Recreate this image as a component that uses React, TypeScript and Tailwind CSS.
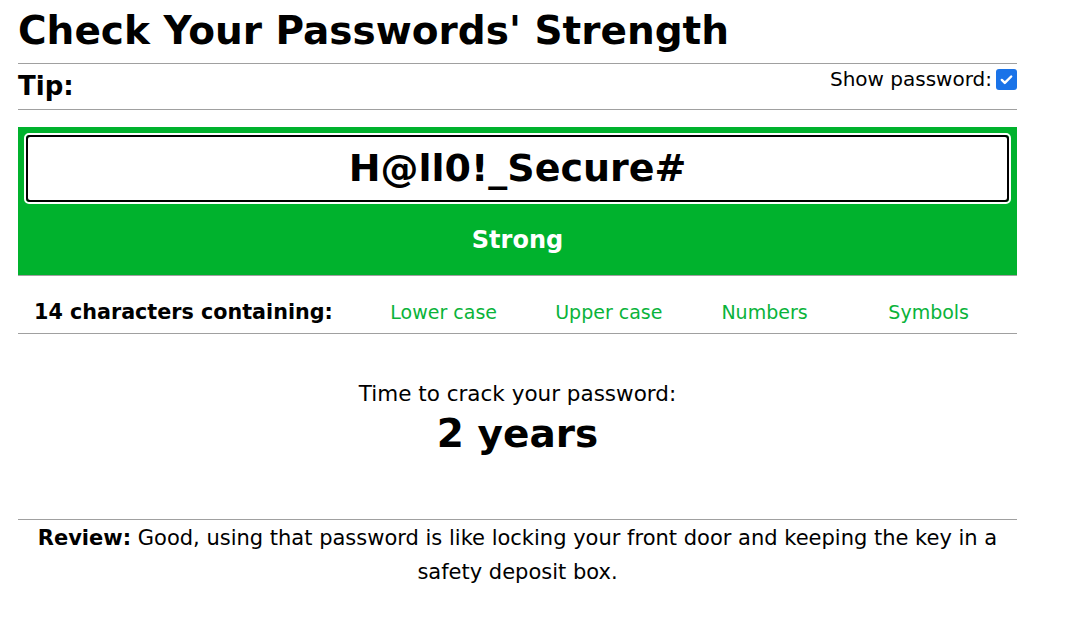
import React from 'react';

const checks = [
  { label: 'Lower case', w: 'w-[171px]' },
  { label: 'Upper case', w: 'w-[160px]' },
  { label: 'Numbers', w: 'w-[152px]' },
  { label: 'Symbols', w: 'w-[177px]' },
];

export default function App() {
  return (
    <div className="min-h-[623px] bg-white text-black font-['DejaVu_Sans',Verdana,sans-serif]">
      <div className="ml-[18px] w-[999px]">
        <h1 className="h-[63px] pt-[8px] text-[39px] leading-[46px] font-bold">
          Check Your Passwords' Strength
        </h1>
        <div className="flex h-[47px] items-start justify-between border-y border-[#a0a0a0]">
          <span className="pt-[4px] text-[26px] leading-[36px] font-bold">Tip:</span>
          <label className="flex items-center gap-[4px] pt-[3px] text-[20px] leading-[24px]">
            Show password:
            <span className="flex h-[21px] w-[21px] items-center justify-center rounded-[3px] bg-[#1a73e8]">
              <svg viewBox="0 0 16 16" className="h-[15px] w-[15px]">
                <path d="M3 8.5l3.2 3.2L13 4.8" fill="none" stroke="white" strokeWidth="2.6" strokeLinecap="round" strokeLinejoin="round" />
              </svg>
            </span>
          </label>
        </div>

        <div className="mt-[17px] border-b border-[#a0a0a0] bg-[#00b22d] px-[6px] pt-[6px]">
          <div className="rounded-[5px] border-2 border-white">
            <div className="flex h-[67px] items-center justify-center rounded-[4px] border-2 border-black bg-white text-[38px] font-bold">
              H@ll0!_Secure#
            </div>
          </div>
          <div className="flex h-[71px] items-center justify-center text-[24px] font-bold text-white">Strong</div>
        </div>

        <div className="flex h-[58px] items-center border-b border-[#a0a0a0] pt-[16px]">
          <span className="w-[341px] pl-[16px] text-[20.7px] font-bold">14 characters containing:</span>
          {checks.map((c) => (
            <span key={c.label} className={`${c.w} text-center text-[19px] text-[#0ab33a]`}>
              {c.label}
            </span>
          ))}
        </div>

        <div className="flex flex-col items-center pt-[46px]">
          <span className="text-[21.5px] leading-[28px]">Time to crack your password:</span>
          <span className="text-[39px] leading-[52px] font-bold">2 years</span>
        </div>

        <div className="mt-[59px] border-t border-[#a0a0a0] px-[16px] pt-[1px] text-center text-[21px] leading-[34px]">
          <b className="font-bold">Review:</b> Good, using that password is like locking your front door and keeping the key in a safety deposit box.
        </div>
      </div>
    </div>
  );
}
